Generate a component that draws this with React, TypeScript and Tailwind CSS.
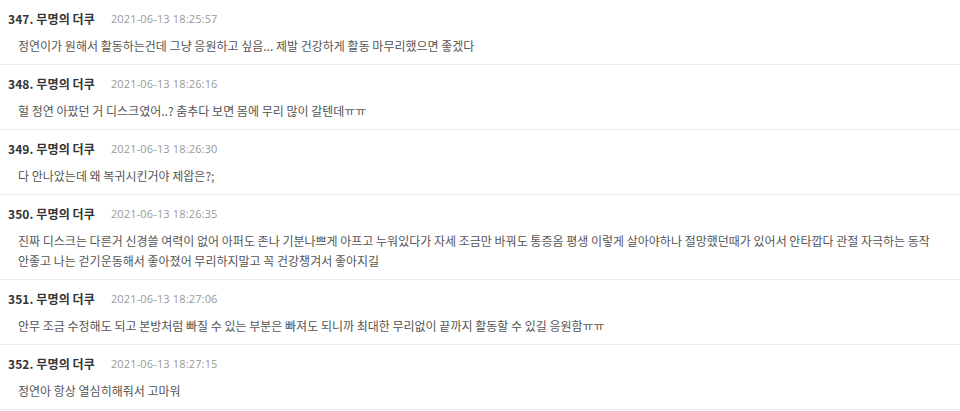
import React from "react";

const items = [
  { n: 347, t: "2021-06-13 18:25:57", body: ["정연이가 원해서 활동하는건데 그냥 응원하고 싶음... 제발 건강하게 활동 마무리했으면 좋겠다"] },
  { n: 348, t: "2021-06-13 18:26:16", body: ["헐 정연 아팠던 거 디스크였어..? 춤추다 보면 몸에 무리 많이 갈텐데ㅠㅠ"] },
  { n: 349, t: "2021-06-13 18:26:30", body: ["다 안나았는데 왜 복귀시킨거야 제왑은?;"] },
  {
    n: 350,
    t: "2021-06-13 18:26:35",
    body: [
      "진짜 디스크는 다른거 신경쓸 여력이 없어 아퍼도 존나 기분나쁘게 아프고 누워있다가 자세 조금만 바꿔도 통증옴 평생 이렇게 살아야하나 절망했던때가 있어서 안타깝다 관절 자극하는 동작",
      "안좋고 나는 걷기운동해서 좋아졌어 무리하지말고 꼭 건강챙겨서 좋아지길",
    ],
  },
  { n: 351, t: "2021-06-13 18:27:06", body: ["안무 조금 수정해도 되고 본방처럼 빠질 수 있는 부분은 빠져도 되니까 최대한 무리없이 끝까지 활동할 수 있길 응원함ㅠㅠ"] },
  { n: 352, t: "2021-06-13 18:27:15", body: ["정연아 항상 열심히해줘서 고마워"] },
];

export default function App() {
  return (
    <div
      className="w-[960px] h-[411px] overflow-hidden bg-white"
      style={{ fontFamily: '"Noto Sans CJK KR", "Noto Sans", sans-serif' }}
    >
      {items.map((it) => (
        <div key={it.n} className="border-b border-[#ebebeb] pt-[10px] pb-[8px]">
          <div className="flex items-center h-[18px] pl-[8px]">
            <span className="text-[12px] font-bold text-[#333] tracking-[0.1px]">
              {it.n}. 무명의 더쿠
            </span>
            <span
              className="ml-[16px] text-[11px] text-[#999] tracking-[0.15px]"
              style={{ fontFamily: '"Open Sans", "Noto Sans", sans-serif' }}
            >
              {it.t}
            </span>
          </div>
          <div className="mt-[8px] pl-[18px] text-[12px] leading-[20px] text-[#555]">
            {it.body.map((l, i) => (
              <div key={i} className="whitespace-nowrap">
                {l}
              </div>
            ))}
          </div>
        </div>
      ))}
    </div>
  );
}
